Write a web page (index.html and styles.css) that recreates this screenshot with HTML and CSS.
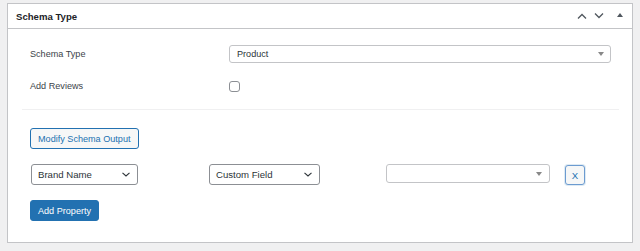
FILE: index.html
```html
<!DOCTYPE html>
<html lang="en">
<head>
  <meta charset="UTF-8" />
  <meta name="viewport" content="width=device-width, initial-scale=1.0"/>
  <title>Schema Type</title>
  <link rel="stylesheet" href="styles.css">
</head>

<body>
  <div class="postbox">
    <div class="postbox-header">
      <h2 class="hndle">Schema Type</h2>
      <div class="handle-actions">
        <button class="handle-btn" aria-label="Move up">
          <svg viewBox="0 0 10 6" width="10" height="6"><path d="M1 5.5L5 1.5L9 5.5" fill="none" stroke="#50575e" stroke-width="1.3"/></svg>
        </button>
        <button class="handle-btn" aria-label="Move down">
          <svg viewBox="0 0 10 6" width="10" height="6"><path d="M1 0.5L5 4.5L9 0.5" fill="none" stroke="#50575e" stroke-width="1.3"/></svg>
        </button>
        <button class="handle-btn toggle" aria-label="Toggle panel">
          <svg viewBox="0 0 6 4" width="6" height="4"><path d="M0 4L3 0L6 4z" fill="#50575e"/></svg>
        </button>
      </div>
    </div>

    <div class="inside">
      <div class="form-table">
        <div class="form-row">
          <label class="form-label">Schema Type</label>
          <div class="form-field">
            <div class="select2">
              <span class="select2-text">Product</span>
              <svg class="select2-arrow" viewBox="0 0 6 4" width="6" height="4"><path d="M0 0L6 0L3 4z" fill="#888"/></svg>
            </div>
          </div>
        </div>
        <div class="form-row">
          <label class="form-label">Add Reviews</label>
          <div class="form-field">
            <span class="checkbox"></span>
          </div>
        </div>
      </div>

      <hr class="divider">

      <div class="schema-output">
        <button class="button">Modify Schema Output</button>

        <div class="property-row">
          <div class="wp-select brand">
            <span>Brand Name</span>
            <svg class="chevron" viewBox="0 0 8 5" width="8" height="5"><path d="M0.5 0.8L4 4L7.5 0.8" fill="none" stroke="#2c3338" stroke-width="1.1"/></svg>
          </div>
          <div class="wp-select custom">
            <span>Custom Field</span>
            <svg class="chevron" viewBox="0 0 8 5" width="8" height="5"><path d="M0.5 0.8L4 4L7.5 0.8" fill="none" stroke="#2c3338" stroke-width="1.1"/></svg>
          </div>
          <div class="select2 empty">
            <span class="select2-text"></span>
            <svg class="select2-arrow" viewBox="0 0 6 4" width="6" height="4"><path d="M0 0L6 0L3 4z" fill="#888"/></svg>
          </div>
          <button class="button remove">X</button>
        </div>

        <button class="button button-primary">Add Property</button>
      </div>
    </div>
  </div>
</body>
</html>
```

FILE: styles.css
```css
body {
  margin: 3px 7px;
  background: #f0f0f1;
  font-family: "Liberation Sans", Arial, sans-serif;
  font-size: 9.1px;
  color: #3c434a;
}

/* PANEL */
.postbox {
  background: #fff;
  border: 1px solid #c3c4c7;
  box-shadow: 0 1px 1px rgba(0, 0, 0, 0.04);
}

.postbox-header {
  height: 24px;
  display: flex;
  align-items: center;
  justify-content: space-between;
  border-bottom: 1px solid #c3c4c7;
  padding-left: 8px;
}

.hndle {
  margin: 0;
  font-size: 9.6px;
  font-weight: 700;
  color: #1d2327;
}

.handle-actions {
  display: flex;
  align-items: center;
  height: 100%;
  padding-right: 9px;
}

.handle-btn {
  background: none;
  border: none;
  padding: 0;
  margin: 0;
  width: 17px;
  height: 100%;
  display: flex;
  align-items: center;
  justify-content: center;
  cursor: pointer;
}

.handle-btn.toggle {
  width: 16px;
  justify-content: flex-end;
  padding-bottom: 2px;
}

/* INSIDE */
.inside {
  padding: 0 13px 0 14px;
}

.form-table {
  padding: 9px 8px 0;
}

.form-row {
  height: 32px;
  display: grid;
  grid-template-columns: 199px 1fr;
  align-items: center;
}

.form-label {
  color: #3c434a;
}

.select2 {
  height: 18px;
  box-sizing: border-box;
  border: 1px solid #c3c4c7;
  border-radius: 3px;
  display: flex;
  align-items: center;
  justify-content: space-between;
  padding: 0 6px 0 7px;
  color: #2c3338;
  background: #fff;
}

.select2-arrow {
  flex: none;
}

.checkbox {
  display: block;
  width: 11px;
  height: 11px;
  box-sizing: border-box;
  border: 1px solid #8c8f94;
  border-radius: 3px;
  background: #fff;
  margin-top: 1px;
}

.divider {
  margin: 7px 0 0;
  border: 0;
  border-top: 1px solid #f0f0f1;
  height: 0;
}

/* SCHEMA OUTPUT */
.schema-output {
  padding: 18px 8px 21px;
  display: flex;
  flex-direction: column;
  align-items: flex-start;
  gap: 15px;
}

.button {
  height: 21px;
  box-sizing: border-box;
  padding: 0 7px;
  border: 1px solid #2271b1;
  border-radius: 3px;
  background: #f6f7f7;
  color: #2271b1;
  font-family: "Liberation Sans", Arial, sans-serif;
  font-size: 9.1px;
  cursor: pointer;
}

.button-primary {
  background: #2271b1;
  color: #fff;
}

.property-row {
  display: grid;
  grid-template-columns: 179px 177px 179px auto;
  align-items: start;
}

.wp-select {
  height: 21px;
  box-sizing: border-box;
  border: 1px solid #8c8f94;
  border-radius: 3px;
  display: flex;
  align-items: center;
  justify-content: space-between;
  padding: 0 7px 0 6px;
  color: #2c3338;
  font-size: 9.6px;
  background: #fff;
}

.wp-select.brand {
  width: 107px;
  margin-left: 1px;
}

.wp-select.custom {
  width: 111px;
}

.select2.empty {
  width: 164px;
  height: 19px;
  padding-right: 7px;
}

.button.remove {
  width: 20px;
  height: 20px;
  padding: 0;
  margin-top: 1px;
  border-color: #6c9bd0;
  box-shadow: 0 0 0 1px rgba(34, 113, 177, 0.15);
  font-size: 9.6px;
}
```
